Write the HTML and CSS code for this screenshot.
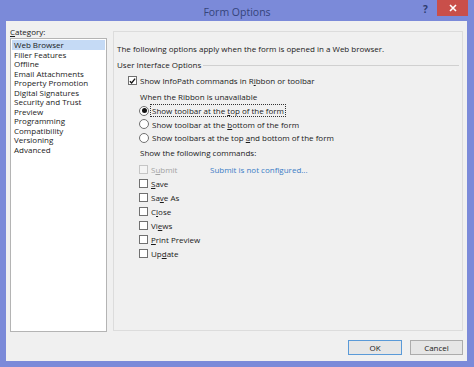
FILE: index.html
```html
<!DOCTYPE html>
<html>
<head>
<meta charset="utf-8">
<link rel="stylesheet" href="styles.css">
</head>
<body>
<div class="window">
  <div class="titlebar">
    <div class="title">Form Options</div>
    <div class="help">?</div>
    <div class="close">
      <svg width="8" height="8" viewBox="0 0 8 8"><path d="M1 1L7 7M7 1L1 7" stroke="#fff" stroke-width="1.6"/></svg>
    </div>
  </div>
  <div class="client">
    <div class="main">
      <div class="leftcol">
        <div class="label"><u>C</u>ategory:</div>
        <div class="listbox">
          <div class="item sel">Web Browser</div>
          <div class="item">Filler Features</div>
          <div class="item">Offline</div>
          <div class="item">Email Attachments</div>
          <div class="item">Property Promotion</div>
          <div class="item">Digital Signatures</div>
          <div class="item">Security and Trust</div>
          <div class="item">Preview</div>
          <div class="item">Programming</div>
          <div class="item">Compatibility</div>
          <div class="item">Versioning</div>
          <div class="item">Advanced</div>
        </div>
      </div>
      <div class="panel">
        <div class="intro">The following options apply when the form is opened in a Web browser.</div>
        <div class="group"><span>User Interface Options</span><div class="rule"></div></div>
        <div class="row chkrow">
          <span class="cb checked"><svg width="8" height="8" viewBox="0 0 8 8"><path d="M1 4.2L3 6.3L7 1.3" fill="none" stroke="#111" stroke-width="1.5"/></svg></span>
          <span>Show InfoPath commands in R<u>i</u>bbon or toolbar</span>
        </div>
        <div class="sub">
          <div class="heading">When the Ribbon is unavailable</div>
          <div class="radios">
            <div class="row rrow"><span class="radio on"></span><span class="focus">Show toolbar at the <u>t</u>op of the form</span></div>
            <div class="row rrow"><span class="radio"></span><span>Show toolbar at the <u>b</u>ottom of the form</span></div>
            <div class="row rrow"><span class="radio"></span><span>Show toolbars at the top <u>a</u>nd bottom of the form</span></div>
          </div>
          <div class="heading h2">Show the following commands:</div>
          <div class="cmds">
            <div class="row crow disabled"><span class="cb"></span><span class="cmdlabel">S<u>u</u>bmit</span><span class="link">Submit is not configured...</span></div>
            <div class="row crow"><span class="cb"></span><span><u>S</u>ave</span></div>
            <div class="row crow"><span class="cb"></span><span>Sa<u>v</u>e As</span></div>
            <div class="row crow"><span class="cb"></span><span>C<u>l</u>ose</span></div>
            <div class="row crow"><span class="cb"></span><span>Vi<u>e</u>ws</span></div>
            <div class="row crow"><span class="cb"></span><span><u>P</u>rint Preview</span></div>
            <div class="row crow"><span class="cb"></span><span>Up<u>d</u>ate</span></div>
          </div>
        </div>
      </div>
    </div>
    <div class="footer">
      <button class="btn default">OK</button>
      <button class="btn">Cancel</button>
    </div>
  </div>
</div>
</body>
</html>
```

FILE: styles.css
```css
* { box-sizing: border-box; }
html, body { margin: 0; padding: 0; }
body {
  width: 474px;
  height: 367px;
  overflow: hidden;
  background: #7b8ad9;
  font-family: "Open Sans", "Noto Sans", sans-serif;
  font-size: 8px;
  color: #1a1a1a;
}
.window {
  width: 474px;
  height: 367px;
  display: flex;
  flex-direction: column;
}
.titlebar {
  height: 22px;
  display: flex;
  align-items: flex-start;
  position: relative;
}
.title {
  position: absolute;
  left: 0;
  right: 0;
  top: 5px;
  text-align: center;
  font-size: 10.5px;
  color: #35447a;
}
.help {
  position: absolute;
  left: 423px;
  top: 2px;
  font-size: 10px;
  font-weight: bold;
  color: #2d3a6e;
}
.close {
  position: absolute;
  left: 437px;
  top: 0;
  width: 31px;
  height: 16px;
  background: #c94f4a;
  display: flex;
  align-items: center;
  justify-content: center;
}
.client {
  flex: 1;
  margin: 0 7px 6px 6px;
  background: #f0f0f0;
  padding: 5px 4px 6px 4px;
  display: flex;
  flex-direction: column;
}
.main {
  display: flex;
  gap: 6px;
}
.leftcol {
  width: 97px;
  display: flex;
  flex-direction: column;
}
.label {
  height: 12px;
  line-height: 11px;
}
.listbox {
  height: 294px;
  background: #fff;
  border: 1px solid #b4b4b4;
  padding: 1px 1px;
}
.item {
  height: 9.55px;
  line-height: 9.5px;
  padding-left: 2px;
  white-space: nowrap;
}
.item.sel {
  background: #c5daf5;
}
.panel {
  flex: 1;
  margin-top: 5px;
  height: 300px;
  border: 1px solid #dcdcdc;
  padding: 11px 0 0 3px;
}
.intro {
  height: 11px;
  line-height: 11px;
}
.group {
  display: flex;
  align-items: center;
  margin-top: 5px;
  height: 11px;
  padding-right: 3px;
}
.group span { white-space: nowrap; }
.rule {
  flex: 1;
  height: 1px;
  background: #d0d0d0;
  margin-left: 2px;
  margin-top: 1px;
}
.row {
  display: flex;
  align-items: center;
  white-space: nowrap;
}
.chkrow {
  margin-top: 5px;
  margin-left: 11px;
  height: 11px;
}
.cb {
  width: 9px;
  height: 9px;
  border: 1px solid #707070;
  background: #fff;
  display: inline-flex;
  align-items: center;
  justify-content: center;
  margin-right: 3px;
  flex: none;
}
.sub {
  margin-left: 23px;
}
.heading {
  margin-top: 5px;
  height: 11px;
  line-height: 11px;
}
.radios { margin-top: 2px; }
.rrow {
  margin-left: -1px;
  height: 13.5px;
}
.radio {
  width: 10px;
  height: 10px;
  border: 1px solid #707070;
  border-radius: 50%;
  background: #fff;
  margin-right: 3px;
  flex: none;
  display: inline-flex;
  align-items: center;
  justify-content: center;
}
.radio.on::after {
  content: "";
  width: 5px;
  height: 5px;
  border-radius: 50%;
  background: #111;
}
.focus {
  outline: 1px dotted #333;
  outline-offset: 0;
  padding: 0 1px;
  margin-left: -1px;
}
.h2 { margin-top: 2px; }
.cmds { margin-top: 5px; }
.crow {
  height: 14px;
  margin-left: -1px;
}
.disabled { color: #a3a3a3; }
.disabled .cb { border-color: #c5c5c5; background: #f4f4f4; }
.cmdlabel { width: 59px; }
.link { color: #3a7cc6; }
.footer {
  display: flex;
  justify-content: flex-end;
  gap: 8px;
  margin-top: 8px;
}
.btn {
  width: 54px;
  height: 15px;
  font-family: inherit;
  font-size: 8px;
  color: #1a1a1a;
  background: #e6e6e6;
  border: 1px solid #acacac;
  padding: 0;
  line-height: 13px;
}
.btn.default {
  border-color: #5a9ad8;
}
.btn:last-child { width: 53px; }
```
